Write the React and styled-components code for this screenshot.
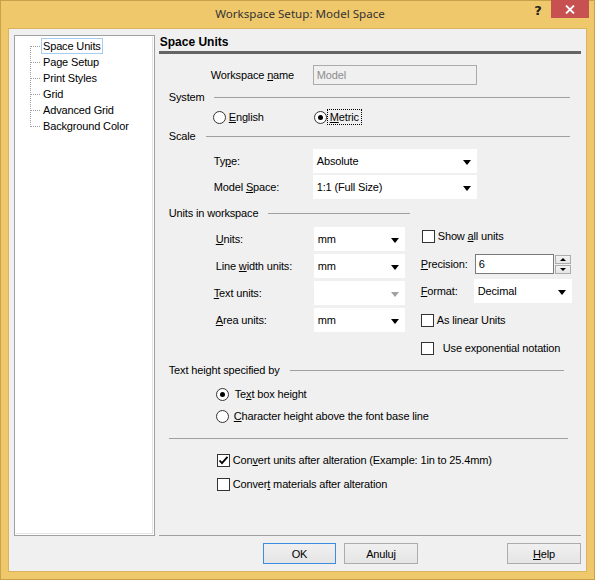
import React from 'react'
import styled, { createGlobalStyle } from 'styled-components'

const GlobalStyle = createGlobalStyle`
  html, body {
    margin: 0;
    padding: 0;
    background: #f0c86c;
  }
  body {
    font-family: "Liberation Sans", Arial, sans-serif;
    font-size: 11px;
    letter-spacing: -0.15px;
    color: #000;
  }
`;

const Window = styled.div`
  width: 595px;
  height: 580px;
  box-sizing: border-box;
  background: #f0c86c;
  border: 1px solid #c9a14a;
  display: flex;
  flex-direction: column;
  padding: 0 7px 7px 7px;
`;

const TitleBar = styled.div`
  height: 27px;
  position: relative;
  display: flex;
  align-items: center;
  justify-content: center;
  flex-shrink: 0;
`;

const Title = styled.div`
  font-family: "Noto Sans", "Open Sans", sans-serif;
  font-size: 11.6px;
  letter-spacing: 0;
  color: #333;
  margin-top: -2px;
  margin-left: 5px;
`;

const CaptionButtons = styled.div`
  position: absolute;
  top: -1px;
  right: -2px;
  display: flex;
  align-items: flex-start;
`;

const HelpGlyph = styled.div`
  width: 26px;
  height: 20px;
  font-family: "DejaVu Sans", sans-serif;
  font-weight: bold;
  font-size: 13px;
  color: #222;
  text-align: center;
  line-height: 22px;
`;

const CloseButton = styled.div`
  width: 38px;
  height: 18px;
  background: #c75050;
  display: flex;
  align-items: center;
  justify-content: center;
`;

const Client = styled.div`
  flex: 1;
  background: #f0f0f0;
  border: 1px solid #d9b35e;
  display: flex;
  flex-direction: column;
  padding: 6px 5px 0 5px;
`;

const MainRow = styled.div`
  display: flex;
  gap: 4px;
`;

const Tree = styled.div`
  width: 141px;
  height: 501px;
  box-sizing: border-box;
  background: #fff;
  border: 1px solid #a0a0a0;
  box-shadow: inset 0 0 0 1px #fff, inset -2px -2px 0 0 #e3e3e3;
  padding: 2px 0 0 1px;
  display: flex;
  flex-direction: column;
`;

const TreeItem = styled.div`
  display: flex;
  align-items: center;
  height: 16px;
`;

const TreeLabel = styled.span`
  box-sizing: border-box;
  height: 16px;
  line-height: 14px;
  padding: 0 1px;
  border: 1px solid ${p => (p.$focused ? '#a6cdef' : 'transparent')};
`;

const Panel = styled.div`
  width: 423px;
  height: 500px;
  display: flex;
  flex-direction: column;
  border-bottom: 1px solid #a0a0a0;
`;

const Heading = styled.div`
  height: 16px;
  line-height: 15px;
  font-weight: bold;
  font-size: 12px;
  letter-spacing: 0;
  padding-left: 1px;
`;

const HeadingRule = styled.div`
  height: 3px;
  background: #646464;
`;

const GroupHeader = styled.div`
  display: flex;
  align-items: center;
  height: 14px;
  margin-top: ${p => p.$mt}px;
  padding-left: 10px;
  padding-right: ${p => p.$pr}px;
  &::after {
    content: '';
    flex: 1;
    height: 1px;
    background: #a0a0a0;
    margin-left: ${p => p.$gap}px;
  }
`;

const Separator = styled.div`
  height: 1px;
  background: #a0a0a0;
  margin: ${p => p.$mt}px 13px 0 10px;
`;

const FieldRow = styled.div`
  display: grid;
  grid-template-columns: ${p => p.$label}px auto;
  align-items: center;
  margin-top: ${p => p.$mt}px;
  padding-left: ${p => p.$pl}px;
  height: ${p => p.$h || 24}px;
`;

const TextBox = styled.div`
  box-sizing: border-box;
  width: ${p => p.$w}px;
  height: 20px;
  border: 1px solid ${p => (p.$dark ? '#7a7a7a' : '#ababab')};
  background: ${p => (p.$disabled ? '#f0f0f0' : '#fff')};
  color: ${p => (p.$disabled ? '#8c8c8c' : '#000')};
  line-height: 18px;
  padding-left: 3px;
`;

const Select = styled.div`
  box-sizing: border-box;
  width: ${p => p.$w}px;
  height: 24px;
  background: #fff;
  display: flex;
  align-items: center;
  justify-content: space-between;
  padding: 0 6px 0 4px;
`;

const Arrow = styled.span`
  width: 0;
  height: 0;
  border-left: 4.5px solid transparent;
  border-right: 4.5px solid transparent;
  border-top: 5px solid ${p => (p.$disabled ? '#a0a0a0' : '#000')};
  margin-top: 2px;
`;

const OptionRow = styled.div`
  display: flex;
  align-items: center;
  height: ${p => p.$h || 14}px;
  margin-top: ${p => p.$mt}px;
  padding-left: ${p => p.$pl}px;
`;

const RadioGroup = styled.div`
  display: grid;
  grid-template-columns: 101px auto;
  align-items: center;
  height: 14px;
  margin-top: ${p => p.$mt}px;
  padding-left: ${p => p.$pl}px;
`;

const Choice = styled.label`
  display: flex;
  align-items: center;
  gap: ${p => p.$gap || 3}px;
`;

const RadioCircle = styled.span`
  box-sizing: border-box;
  width: 13px;
  height: 13px;
  border-radius: 50%;
  border: 1px solid #333;
  background: #fff;
  display: flex;
  align-items: center;
  justify-content: center;
  &::after {
    content: '';
    width: 5px;
    height: 5px;
    border-radius: 50%;
    background: ${p => (p.$checked ? '#000' : 'transparent')};
  }
`;

const CheckBox = styled.span`
  box-sizing: border-box;
  width: 13px;
  height: 13px;
  border: 1px solid #333;
  background: #fff;
  display: flex;
  align-items: center;
  justify-content: center;
  flex-shrink: 0;
`;

const FocusText = styled.span`
  outline: 1px dotted #000;
  outline-offset: 1px;
  padding: 0 1px;
`;

const Mn = styled.span`
  text-decoration: underline;
  text-underline-offset: 1px;
`;

const UnitsArea = styled.div`
  display: flex;
  margin-top: 7px;
`;

const UnitsLeft = styled.div`
  width: 262px;
  display: flex;
  flex-direction: column;
`;

const UnitsRight = styled.div`
  display: flex;
  flex-direction: column;
`;

const Spin = styled.div`
  display: flex;
  align-items: center;
  gap: 1px;
`;

const SpinButtons = styled.div`
  display: flex;
  flex-direction: column;
  gap: 1px;
`;

const SpinButton = styled.div`
  box-sizing: border-box;
  width: 16px;
  height: 9px;
  border: 1px solid #acacac;
  background: linear-gradient(#f2f2f2, #e5e5e5);
  display: flex;
  align-items: center;
  justify-content: center;
  &::after {
    content: '';
    border-left: 3px solid transparent;
    border-right: 3px solid transparent;
    ${p => (p.$up ? 'border-bottom: 3px solid #000;' : 'border-top: 3px solid #000;')}
  }
`;

const Spacer = styled.div`
  flex: 1;
`;

const ButtonRow = styled.div`
  display: flex;
  justify-content: flex-end;
  padding: 7px 0 0 0;
`;

const Button = styled.div`
  box-sizing: border-box;
  width: ${p => p.$w || 74}px;
  height: 21px;
  margin-right: ${p => p.$mr || 0}px;
  border: 1px solid ${p => (p.$default ? '#3c8ce0' : '#acacac')};
  background: linear-gradient(#f0f0f0, #e5e5e5);
  display: flex;
  align-items: center;
  justify-content: center;
`;

const treeItems = ['Space Units', 'Page Setup', 'Print Styles', 'Grid', 'Advanced Grid', 'Background Color'];

function Connector({ first, last }) {
  return (
    <svg width="25" height="16" style={{ flexShrink: 0 }}>
      <line x1="14.5" y1={first ? 8 : 0} x2="14.5" y2={last ? 9 : 16} stroke="#a0a0a0" strokeDasharray="1 1" />
      <line x1="15" y1="8.5" x2="24" y2="8.5" stroke="#a0a0a0" strokeDasharray="1 1" />
    </svg>
  );
}

function Check() {
  return (
    <svg width="11" height="11" viewBox="0 0 11 11">
      <path d="M1.5 5.5 L4 8.2 L9.5 1.8" fill="none" stroke="#000" strokeWidth="1.8" />
    </svg>
  );
}

export default function App() {
  return (
    <Window>
      <GlobalStyle />
      <TitleBar>
        <Title>Workspace Setup: Model Space</Title>
        <CaptionButtons>
          <HelpGlyph>?</HelpGlyph>
          <CloseButton>
            <svg width="10" height="9" viewBox="0 0 10 9">
              <path d="M1 0.5 L9 8.5 M9 0.5 L1 8.5" stroke="#fff" strokeWidth="1.8" />
            </svg>
          </CloseButton>
        </CaptionButtons>
      </TitleBar>
      <Client>
        <MainRow>
          <Tree>
            {treeItems.map((t, i) => (
              <TreeItem key={t}>
                <Connector first={i === 0} last={i === treeItems.length - 1} />
                <TreeLabel $focused={i === 0}>{t}</TreeLabel>
              </TreeItem>
            ))}
          </Tree>
          <Panel>
            <Heading>Space Units</Heading>
            <HeadingRule />

            <FieldRow $label={102} $pl={52} $mt={11} $h={20}>
              <span>Workspace <Mn>n</Mn>ame</span>
              <TextBox $w={164} $disabled>Model</TextBox>
            </FieldRow>

            <GroupHeader $mt={5} $gap={9} $pr={11}>System</GroupHeader>
            <RadioGroup $mt={6} $pl={54}>
              <Choice><RadioCircle /><span><Mn>E</Mn>nglish</span></Choice>
              <Choice $gap={2}><RadioCircle $checked /><FocusText><Mn>M</Mn>etric</FocusText></Choice>
            </RadioGroup>

            <GroupHeader $mt={5} $gap={10} $pr={11}>Scale</GroupHeader>
            <FieldRow $label={99} $pl={55} $mt={6}>
              <span>Ty<Mn>p</Mn>e:</span>
              <Select $w={164}>Absolute<Arrow /></Select>
            </FieldRow>
            <FieldRow $label={99} $pl={55} $mt={2}>
              <span>Model <Mn>S</Mn>pace:</span>
              <Select $w={164}>1:1 (Full Size)<Arrow /></Select>
            </FieldRow>

            <GroupHeader $mt={7} $gap={10} $pr={171}>Units in workspace</GroupHeader>
            <UnitsArea>
              <UnitsLeft>
                <FieldRow $label={98} $pl={57} $mt={0}>
                  <span><Mn>U</Mn>nits:</span>
                  <Select $w={91}>mm<Arrow /></Select>
                </FieldRow>
                <FieldRow $label={98} $pl={57} $mt={3}>
                  <span>Line <Mn>w</Mn>idth units:</span>
                  <Select $w={91}>mm<Arrow /></Select>
                </FieldRow>
                <FieldRow $label={100} $pl={55} $mt={3}>
                  <span><Mn>T</Mn>ext units:</span>
                  <Select $w={91}><span /><Arrow $disabled /></Select>
                </FieldRow>
                <FieldRow $label={98} $pl={57} $mt={3}>
                  <span><Mn>A</Mn>rea units:</span>
                  <Select $w={91}>mm<Arrow /></Select>
                </FieldRow>
              </UnitsLeft>
              <UnitsRight>
                <OptionRow $mt={1} $h={16} $pl={1}>
                  <Choice><CheckBox /><span>Show <Mn>a</Mn>ll units</span></Choice>
                </OptionRow>
                <FieldRow $label={54} $pl={0} $mt={10} $h={20}>
                  <span><Mn>P</Mn>recision:</span>
                  <Spin>
                    <TextBox $w={79} $dark>6</TextBox>
                    <SpinButtons>
                      <SpinButton $up />
                      <SpinButton />
                    </SpinButtons>
                  </Spin>
                </FieldRow>
                <FieldRow $label={53} $pl={0} $mt={5}>
                  <span><Mn>F</Mn>ormat:</span>
                  <Select $w={98}>Decimal<Arrow /></Select>
                </FieldRow>
                <OptionRow $mt={9} $h={16} $pl={0}>
                  <Choice><CheckBox /><span>As linear Units</span></Choice>
                </OptionRow>
                <OptionRow $mt={12} $h={16} $pl={0}>
                  <Choice $gap={9}><CheckBox /><span>Use exponential notation</span></Choice>
                </OptionRow>
              </UnitsRight>
            </UnitsArea>

            <GroupHeader $mt={7} $gap={10} $pr={17}>Text height specified by</GroupHeader>
            <OptionRow $mt={10} $pl={57}>
              <Choice $gap={6}><RadioCircle $checked /><span>Te<Mn>x</Mn>t box height</span></Choice>
            </OptionRow>
            <OptionRow $mt={8} $pl={57}>
              <Choice $gap={5}><RadioCircle /><span><Mn>C</Mn>haracter height above the font base line</span></Choice>
            </OptionRow>

            <Separator $mt={15} />

            <OptionRow $mt={13} $h={16} $pl={58}>
              <Choice><CheckBox><Check /></CheckBox><span>Con<Mn>v</Mn>ert units after alteration (Example: 1in to 25.4mm)</span></Choice>
            </OptionRow>
            <OptionRow $mt={8} $h={16} $pl={58}>
              <Choice><CheckBox /><span>Conver<Mn>t</Mn> materials after alteration</span></Choice>
            </OptionRow>
            <Spacer />
          </Panel>
        </MainRow>
        <ButtonRow>
          <Button $w={73} $mr={8} $default>OK</Button>
          <Button $mr={89}>Anuluj</Button>
          <Button><span><Mn>H</Mn>elp</span></Button>
        </ButtonRow>
      </Client>
    </Window>
  )
}
